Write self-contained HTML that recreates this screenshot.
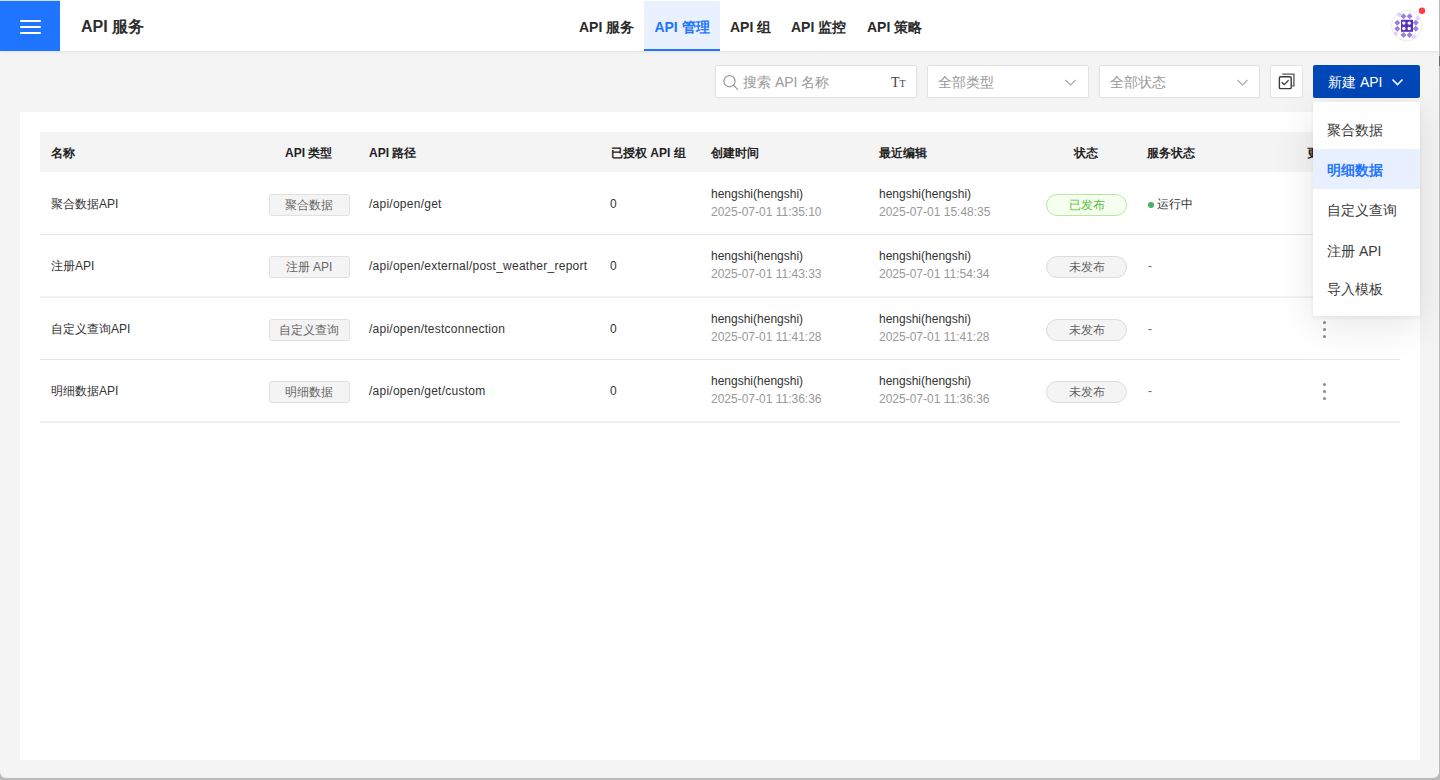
<!DOCTYPE html>
<html><head><meta charset="utf-8">
<style>
*{box-sizing:border-box;margin:0;padding:0}
html,body{width:1440px;height:780px;overflow:hidden;background:#b9b9b9}
body{font-family:"Liberation Sans",sans-serif;color:#333;position:relative}
#win{position:absolute;left:0;top:0;width:1439px;height:778px;background:#f4f4f4;border-radius:0 0 6px 6px;overflow:hidden}
#sb{position:absolute;left:1439px;top:56px;width:1px;height:10px;background:#6a6a6a}
#hdr{position:absolute;left:0;top:0;width:1439px;height:51px;background:#fff;box-shadow:0 1px 3px rgba(0,0,0,.08)}
#burger{position:absolute;left:0;top:1px;width:60px;height:50px;background:#1f75ff;box-shadow:0 -1px 0 #cfe0fb}
#burger i{position:absolute;left:20px;width:21px;height:2px;background:#fff;border-radius:1px}
.title{position:absolute;left:81px;top:17px;font-size:16px;font-weight:bold;color:#2e2e2e;line-height:20px}
.nav{position:absolute;top:0;height:51px;font-size:14px;font-weight:bold;color:#2a2a2a;line-height:54px}
.nav.act{top:1px;height:50px;line-height:52px;background:#e9f0fe;color:#1f75ff;border-bottom:2px solid #1f75ff}
.abs{position:absolute}
.inp{position:absolute;top:65px;height:33px;background:#fff;border:1px solid #e2e2e2;border-radius:2px;font-size:14px;color:#999;line-height:33px}
#card{position:absolute;left:20px;top:112px;width:1400px;height:648px;background:#fff}
.th{position:absolute;left:40px;top:132px;width:1360px;height:40px;background:#f4f4f4}
.hc{position:absolute;top:146px;font-size:12px;font-weight:bold;color:#222;line-height:14px}
.row{position:absolute;left:40px;width:1360px;border-bottom:1px solid #e4e4e4}
.c{position:absolute;font-size:12px;color:#333;line-height:14px;white-space:nowrap}
.g{color:#999}
.tag{position:absolute;left:268px;width:81px;height:22px;background:#f4f4f4;border:1px solid #e0e0e0;border-radius:3px;font-size:12px;color:#666;text-align:center;line-height:20px}
.pill{position:absolute;left:1046px;width:81px;height:22px;background:#f4f4f4;border:1px solid #ddd;border-radius:11px;font-size:12px;color:#666;text-align:center;line-height:20px}
.pill.ok{background:#f6fef0;border-color:#b5eba0;color:#58c23a}
.kebab{position:absolute;left:1322px;width:4px}
.kebab i{display:block;width:3px;height:3px;border-radius:50%;background:#8a8a8a;margin-bottom:4px}
#menu{position:absolute;left:1313px;top:102px;width:107px;height:214px;background:#fff;border-radius:2px;box-shadow:0 2px 4px rgba(0,0,0,.06),0 8px 40px rgba(0,0,0,.10)}
.mi{position:absolute;left:14px;font-size:14px;color:#3a3a3a;line-height:16px;white-space:nowrap}
.row.half{border-bottom:0}
.row.half:after{content:"";position:absolute;left:0;right:0;bottom:-1px;height:2px;background:#f1f1f1}
.row .tag{left:228.5px;top:22px}
.row .pill{left:1006px;top:22px}
.p{letter-spacing:.25px}
.n{top:25px}.l1{top:15px}.l2{top:33px}
.dot{position:absolute;left:1107.5px;top:29.5px;width:6px;height:6px;border-radius:50%;background:#45b069}
.row .kebab{left:1283px;top:24px}
.msel{position:absolute;left:0;top:47px;width:107px;height:40px;background:#e8f0ff}
.mi.sel{color:#1f75ff;font-weight:bold}
</style></head><body>
<div id="win">
<div id="hdr">
  <div id="burger"><i style="top:19px"></i><i style="top:25px"></i><i style="top:31px"></i></div>
  <div class="title">API 服务</div>
  <div class="nav" style="left:579px">API 服务</div>
  <div class="nav act" style="left:644px;width:76px;text-align:center">API 管理</div>
  <div class="nav" style="left:730px">API 组</div>
  <div class="nav" style="left:791px">API 监控</div>
  <div class="nav" style="left:867px">API 策略</div>
<svg class="abs" style="left:1388px;top:4px" width="40" height="40" viewBox="0 0 40 40">
<circle cx="18.7" cy="21.6" r="15.2" fill="#fff" stroke="#e4e4e4" stroke-width="0.8"/>
<g fill="#ddd3f6"><path d="M11.2 8.0L13.799999999999999 10.6L11.2 13.2L8.6 10.6Z"/><path d="M29.7 11.5L32.3 14.1L29.7 16.7L27.099999999999998 14.1Z"/><path d="M7.8 26.9L10.4 29.5L7.8 32.1L5.199999999999999 29.5Z"/><path d="M26.2 30.299999999999997L28.8 32.9L26.2 35.5L23.599999999999998 32.9Z"/></g>
<g fill="#9b80df"><path d="M15.5 9.3L18.5 12.3L15.5 15.3L12.5 12.3Z"/><path d="M21.6 9.3L24.6 12.3L21.6 15.3L18.6 12.3Z"/><path d="M15.5 28L18.5 31L15.5 34L12.5 31Z"/><path d="M21.6 28L24.6 31L21.6 34L18.6 31Z"/><path d="M9.3 15.7L12.3 18.7L9.3 21.7L6.300000000000001 18.7Z"/><path d="M9.3 21.8L12.3 24.8L9.3 27.8L6.300000000000001 24.8Z"/><path d="M27.8 15.7L30.8 18.7L27.8 21.7L24.8 18.7Z"/><path d="M27.8 21.8L30.8 24.8L27.8 27.8L24.8 24.8Z"/></g>
<rect x="13" y="15.8" width="12" height="12" fill="#5833b5"/>
<g fill="#fff"><circle cx="15.8" cy="19.1" r="1.7"/><circle cx="21.2" cy="19.1" r="1.7"/><circle cx="15.8" cy="24.5" r="1.7"/><circle cx="21.2" cy="24.5" r="1.7"/></g>
<circle cx="34" cy="6.8" r="3.2" fill="#ff3b45"/>
</svg>
</div>

<div class="inp" style="left:715px;width:202px;padding-left:27px">搜索 API 名称</div>
<div class="inp" style="left:927px;width:162px;padding-left:10px">全部类型</div>
<div class="inp" style="left:1099px;width:161px;padding-left:10px">全部状态</div>
<div class="inp" style="left:1270px;width:33px"></div>
<div class="abs" style="left:1313px;top:65px;width:107px;height:33px;background:#0047b8;border-radius:2px;color:#fff;font-size:14px;line-height:35px;padding-left:15px">新建 API</div>

<svg class="abs" style="left:722px;top:74px" width="17" height="17" viewBox="0 0 17 17"><circle cx="7.5" cy="7.2" r="5.6" fill="none" stroke="#999" stroke-width="1.2"/><line x1="11.5" y1="11.2" x2="15.6" y2="15.4" stroke="#999" stroke-width="1.2" stroke-linecap="round"/></svg>
<div class="abs" style="left:891px;top:75px;font-family:'Liberation Serif',serif;font-size:14px;line-height:16px;color:#444">T<span style="font-size:10px">T</span></div>
<svg class="abs" style="left:1064px;top:78px" width="14" height="9" viewBox="0 0 14 9"><polyline points="1.5,2 6.5,7 11.5,2" fill="none" stroke="#aaa" stroke-width="1.2"/></svg>
<svg class="abs" style="left:1236px;top:78px" width="14" height="9" viewBox="0 0 14 9"><polyline points="1.5,2 6.5,7 11.5,2" fill="none" stroke="#aaa" stroke-width="1.2"/></svg>
<svg class="abs" style="left:1277px;top:73px" width="19" height="18" viewBox="0 0 19 18"><path d="M5.2 1.2 H16.9 V12.8 H15.2" fill="none" stroke="#555" stroke-width="1.3"/><rect x="2.4" y="3.8" width="11.8" height="11.8" rx="1.2" fill="#fff" stroke="#3a3a3a" stroke-width="1.4"/><polyline points="4.6,9.2 7.2,11.6 11.6,7.2" fill="none" stroke="#3a3a3a" stroke-width="1.3"/></svg>
<svg class="abs" style="left:1391px;top:78px" width="13" height="9" viewBox="0 0 13 9"><polyline points="1.5,1.5 6.5,6.5 11.5,1.5" fill="none" stroke="#fff" stroke-width="1.6"/></svg>
<div id="card"></div>
<div class="th"></div>
<div class="hc" style="left:51px">名称</div>
<div class="hc" style="left:285px">API 类型</div>
<div class="hc" style="left:369px">API 路径</div>
<div class="hc" style="left:611px">已授权 API 组</div>
<div class="hc" style="left:711px">创建时间</div>
<div class="hc" style="left:879px">最近编辑</div>
<div class="hc" style="left:1074px">状态</div>
<div class="hc" style="left:1147px">服务状态</div>
<div class="hc" style="left:1307px">更多</div>
<div class="row" style="top:172px;height:62.5px">
  <div class="c n" style="left:11px">聚合数据API</div>
  <div class="tag">聚合数据</div>
  <div class="c n p" style="left:329px">/api/open/get</div>
  <div class="c n" style="left:570px">0</div>
  <div class="c l1" style="left:671px">hengshi(hengshi)</div><div class="c l2 g" style="left:671px">2025-07-01 11:35:10</div>
  <div class="c l1" style="left:839px">hengshi(hengshi)</div><div class="c l2 g" style="left:839px">2025-07-01 15:48:35</div>
  <div class="pill ok">已发布</div>
  <div class="dot"></div><div class="c n" style="left:1117px">运行中</div>
  <div class="kebab"><i></i><i></i><i></i></div>
</div>
<div class="row half" style="top:234px;height:63px">
  <div class="c n" style="left:11px">注册API</div>
  <div class="tag">注册 API</div>
  <div class="c n p" style="left:329px">/api/open/external/post_weather_report</div>
  <div class="c n" style="left:570px">0</div>
  <div class="c l1" style="left:671px">hengshi(hengshi)</div><div class="c l2 g" style="left:671px">2025-07-01 11:43:33</div>
  <div class="c l1" style="left:839px">hengshi(hengshi)</div><div class="c l2 g" style="left:839px">2025-07-01 11:54:34</div>
  <div class="pill">未发布</div>
  <div class="c n" style="left:1108px;color:#666">-</div>
  <div class="kebab"><i></i><i></i><i></i></div>
</div>
<div class="row" style="top:297px;height:62.5px">
  <div class="c n" style="left:11px">自定义查询API</div>
  <div class="tag">自定义查询</div>
  <div class="c n p" style="left:329px">/api/open/testconnection</div>
  <div class="c n" style="left:570px">0</div>
  <div class="c l1" style="left:671px">hengshi(hengshi)</div><div class="c l2 g" style="left:671px">2025-07-01 11:41:28</div>
  <div class="c l1" style="left:839px">hengshi(hengshi)</div><div class="c l2 g" style="left:839px">2025-07-01 11:41:28</div>
  <div class="pill">未发布</div>
  <div class="c n" style="left:1108px;color:#666">-</div>
  <div class="kebab"><i></i><i></i><i></i></div>
</div>
<div class="row half" style="top:359px;height:63px">
  <div class="c n" style="left:11px">明细数据API</div>
  <div class="tag">明细数据</div>
  <div class="c n p" style="left:329px">/api/open/get/custom</div>
  <div class="c n" style="left:570px">0</div>
  <div class="c l1" style="left:671px">hengshi(hengshi)</div><div class="c l2 g" style="left:671px">2025-07-01 11:36:36</div>
  <div class="c l1" style="left:839px">hengshi(hengshi)</div><div class="c l2 g" style="left:839px">2025-07-01 11:36:36</div>
  <div class="pill">未发布</div>
  <div class="c n" style="left:1108px;color:#666">-</div>
  <div class="kebab"><i></i><i></i><i></i></div>
</div>

<div id="menu">
  <div class="mi" style="top:20px">聚合数据</div>
  <div class="msel"></div>
  <div class="mi sel" style="top:59.5px">明细数据</div>
  <div class="mi" style="top:100px">自定义查询</div>
  <div class="mi" style="top:140.5px">注册 API</div>
  <div class="mi" style="top:179px">导入模板</div>
</div>
</div>
<div id="sb"></div>
</body></html>
